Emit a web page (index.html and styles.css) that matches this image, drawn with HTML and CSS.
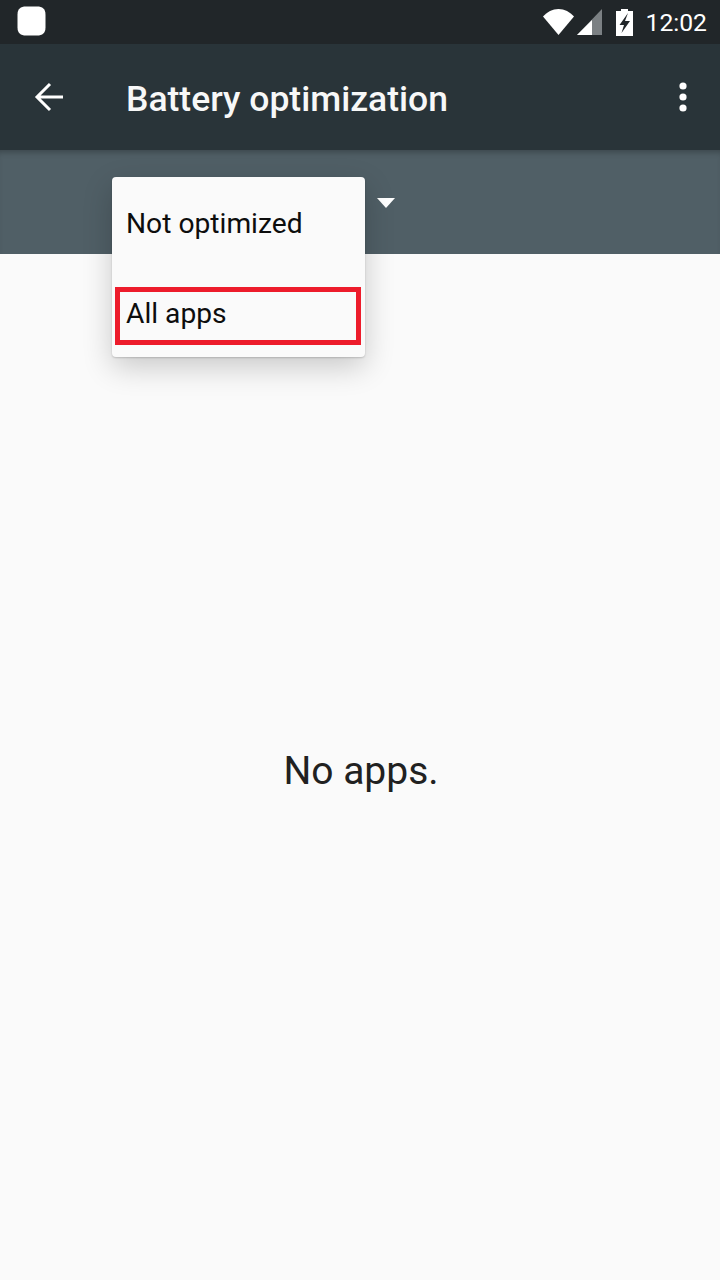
FILE: index.html
```html
<!DOCTYPE html>
<html lang="en">
<head>
<meta charset="utf-8">
<title>Battery optimization</title>
<link rel="stylesheet" href="styles.css">
</head>
<body>
<div class="screen">
  <header class="status">
    <svg class="notif" width="29" height="30" viewBox="0 0 29 30"><path fill="#fff" d="M9 .5h11c5.500 0 8.500 2.500 8.500 8v13c0 5.500-3 8-8.500 8H9c-5.500 0-8.500-2.500-8.500-8v-13c0-5.500 3-8 8.500-8z"/></svg>
    <div class="status-right">
      <svg class="wifi" width="31" height="26" viewBox="0 0 31 26"><path fill="#fff" d="M0 7.500C4 3 9.500 0 15.500 0S27 3 31 7.500L15.500 26z"/></svg>
      <svg class="signal" width="25" height="26" viewBox="0 0 25 26"><path fill="#7b8083" d="M25 0v26H0z"/><path fill="#fff" d="M15 11v15H0z"/></svg>
      <svg class="battery" width="17" height="27" viewBox="0 0 17 27"><path fill="#fff" d="M5 0h7v2h5v25H0V2h5z"/><path fill="#212629" d="M12 4 3.500 16H8l-2.500 8L14 12H9z"/></svg>
      <span class="clock">12:02</span>
    </div>
  </header>
  <div class="toolbar">
    <svg class="back" width="29" height="30" viewBox="0 0 29 30"><path fill="none" stroke="#fff" stroke-width="3" d="M29 15H4M16 2 3 15l13 13"/></svg>
    <h1 class="title">Battery optimization</h1>
    <svg class="more" width="10" height="32" viewBox="0 0 10 32"><circle cx="5" cy="5" r="3.600" fill="#fff"/><circle cx="5" cy="16" r="3.600" fill="#fff"/><circle cx="5" cy="27" r="3.600" fill="#fff"/></svg>
  </div>
  <div class="filter">
    <svg class="caret" width="18" height="10" viewBox="0 0 18 10"><path fill="#fff" d="M0 0h18L9 10z"/></svg>
  </div>
  <div class="menu">
    <div class="item item-first">Not optimized</div>
    <div class="item item-second">All apps</div>
    <div class="highlight"></div>
  </div>
  <main class="content">
    <p class="empty">No apps.</p>
  </main>
</div>
</body>
</html>
```
FILE: styles.css
```css
* { box-sizing: border-box; }
html, body { margin: 0; padding: 0; }
body { font-family: Roboto, "Noto Sans", sans-serif; background: #fafafa; }
.screen { position: relative; width: 720px; height: 1280px; display: flex; flex-direction: column; overflow: hidden; }
.status { height: 44px; flex: none; background: #212629; display: flex; align-items: center; justify-content: space-between; padding: 0 13px 0 17px; }
.status-right { display: flex; align-items: center; color: #fff; }
.notif { display: block; margin-top: -2px; }
.wifi { margin-right: 3px; }
.signal { margin-right: 14px; }
.battery { margin-right: 13px; }
.clock { font-size: 24.700px; line-height: 44px; margin-top: 1px; }
.toolbar { height: 106px; flex: none; background: #293439; display: flex; align-items: center; padding: 0 32px 0 34px; color: #fff; }
.back { flex: none; margin-right: 63px; }
.title { flex: 1; margin: 3px 0 0; font-size: 35.500px; font-weight: 500; line-height: 40px; color: #f7f8f8; }
.more { flex: none; }
.filter { height: 104px; flex: none; background: #505f66; display: flex; align-items: center; padding-left: 377px; box-shadow: inset 0 6px 6px -4px rgba(0,0,0,.28); }
.caret { margin-top: 2px; }
.menu { position: absolute; left: 112px; top: 177px; width: 253px; height: 180px; background: #fafafa; border-radius: 4px; box-shadow: 0 10px 30px rgba(0,0,0,.2), 0 1px 2px rgba(0,0,0,.18); color: #0d0d0d; font-size: 28.200px; }
.item { position: absolute; left: 14px; line-height: 36px; }
.item-first { top: 29px; }
.item-second { top: 119px; }
.highlight { position: absolute; left: 3px; top: 110px; width: 246px; height: 58px; border: 5px solid #ed1c2b; }
.content { flex: 1; display: flex; align-items: center; justify-content: center; }
.empty { margin: 0; font-size: 39px; line-height: 48px; color: #212121; position: relative; top: 4px; left: 1px; }
```
